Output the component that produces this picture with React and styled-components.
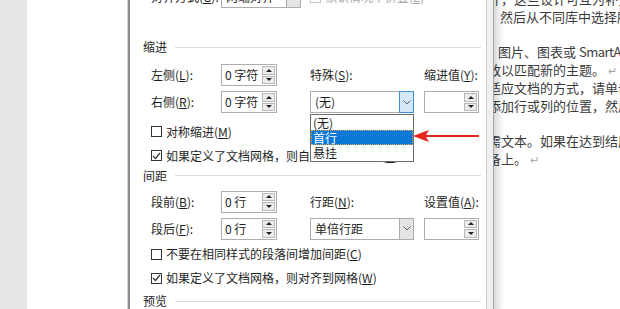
import React from 'react'
import styled, { createGlobalStyle } from 'styled-components'

const GlobalStyle = createGlobalStyle`
  html, body { margin: 0; padding: 0; background: #e6e6e6; }
  body { font-family: "Noto Sans CJK SC", "Noto Sans", sans-serif; }
`

const Screen = styled.div`
  display: flex;
  width: 620px;
  height: 309px;
  overflow: hidden;
  background: #e6e6e6;
`

const Gutter = styled.div`
  flex: none;
  width: 27px;
  background: #e6e6e6;
`

const PageEdge = styled.div`
  flex: none;
  width: 100px;
  background: #fff;
  border-right: 1px solid #d2d2d2;
`

const Dialog = styled.div`
  position: relative;
  flex: none;
  box-sizing: border-box;
  width: 359px;
  display: flex;
  flex-direction: column;
  padding-left: 13px;
  background: #fff;
  border-left: 2px solid #8e8e8e;
  border-right: 1px solid #cacaca;
  font-size: 12px;
  line-height: 16px;
  color: #1f1f1f;
`

const Frame = styled.div`
  flex: none;
  width: 6px;
  background: #f0f0f0;
  border-right: 1px solid #a4a4a4;
`

const Document = styled.div`
  position: relative;
  flex: 1;
  overflow: hidden;
  background: #fff;
  &::after {
    content: '';
    position: absolute;
    left: 0;
    top: 0;
    bottom: 0;
    width: 10px;
    background: linear-gradient(to right, rgba(0, 0, 0, 0.14), rgba(0, 0, 0, 0));
  }
`

const DocText = styled.div`
  margin-top: -10px;
  font-size: 13px;
  line-height: 17.8px;
  color: #3b3b3b;
  white-space: nowrap;
`

const DocLine = styled.div`
  height: 17.8px;
  margin-left: ${p => p.shift || 0}px;
`

const Latin = styled.span`
  letter-spacing: -0.5px;
`

const ReturnMark = styled.span`
  margin-left: 3px;
  font-size: 11px;
  color: #a8a8a8;
`

const TopRow = styled.div`
  display: grid;
  grid-template-columns: 70px 80px 9px auto;
  align-items: center;
  height: 22px;
  margin: -14px 0 0 8px;
`

const SectionHeader = styled.div`
  display: flex;
  align-items: center;
  gap: 8px;
  height: 16px;
  margin-top: ${p => p.top}px;
  margin-right: 5px;
  &::after {
    content: '';
    flex: 1;
    height: 1px;
    background: #dadada;
  }
`

const FieldGrid = styled.div`
  display: grid;
  grid-template-columns: 70px 56px 33px 104px 10px 55px;
  grid-auto-rows: 22px;
  row-gap: 5px;
  align-items: center;
  margin: ${p => p.top}px 0 0 8px;
`

const Label = styled.span`
  grid-column: ${p => p.col};
  white-space: nowrap;
`

const SpinBox = styled.div`
  grid-column: ${p => p.col};
  box-sizing: border-box;
  height: 22px;
  display: flex;
  align-items: center;
  justify-content: space-between;
  padding: 1px 1px 1px 3px;
  border: 1px solid #adadad;
  background: #fff;
`

const Spinner = styled.div`
  display: flex;
  flex-direction: column;
  gap: 1px;
  align-self: stretch;
  width: 13px;
`

const SpinButton = styled.div`
  flex: 1;
  display: flex;
  align-items: center;
  justify-content: center;
  box-sizing: border-box;
  border: 1px solid #b8b8b8;
  background: #ececec;
  &::before {
    content: '';
    border-left: 3px solid transparent;
    border-right: 3px solid transparent;
    ${p => (p.down ? 'border-top: 3px solid #222;' : 'border-bottom: 3px solid #222;')}
  }
`

const SelectCell = styled.div`
  grid-column: ${p => p.col};
  position: relative;
  height: 22px;
`

const Select = styled.div`
  box-sizing: border-box;
  height: 22px;
  display: flex;
  align-items: center;
  padding-left: 4px;
  border: 1px solid #adadad;
  background: #fff;
`

const SelectText = styled.span`
  flex: 1;
  white-space: nowrap;
`

const ArrowBox = styled.div`
  box-sizing: border-box;
  align-self: stretch;
  width: 15px;
  margin: -1px -1px -1px 0;
  display: flex;
  align-items: center;
  justify-content: center;
  border: 1px solid ${p => (p.hover ? '#3c8fd8' : '#adadad')};
  background: ${p => (p.hover ? '#d5e8f8' : '#e4e4e4')};
`

const ListBox = styled.div`
  position: absolute;
  z-index: 2;
  top: 23px;
  left: 0;
  width: 104px;
  box-sizing: border-box;
  border: 1px solid #6e6e6e;
  background: #fff;
  padding: 0 0 1px;
`

const ListItem = styled.div`
  height: 15px;
  line-height: 15px;
  padding-left: 2px;
  box-sizing: border-box;
  background: ${p => (p.active ? '#0a78d7' : '#fff')};
  color: ${p => (p.active ? '#fff' : '#1f1f1f')};
  outline: ${p => (p.active ? '1px dotted #e2a35a' : 'none')};
  outline-offset: -1px;
`

const CheckRow = styled.label`
  display: flex;
  align-items: center;
  gap: 4px;
  height: 18px;
  margin: ${p => p.top}px 0 0 ${p => (p.inline ? 0 : 8)}px;
  white-space: nowrap;
  color: ${p => (p.disabled ? '#a6a6a6' : 'inherit')};
`

const Box = styled.span`
  flex: none;
  box-sizing: border-box;
  width: 11px;
  height: 11px;
  display: flex;
  align-items: center;
  justify-content: center;
  border: 1px solid ${p => (p.disabled ? '#c4c4c4' : '#333')};
  background: #fff;
`

const Arrow = styled.svg`
  position: absolute;
  z-index: 3;
  left: 283px;
  top: 127px;
`

const Key = styled.u`
  text-underline-offset: 1px;
`

const Chevron = () => (
  <svg width="8" height="5" viewBox="0 0 8 5">
    <polyline points="0.5,0.5 4,4 7.5,0.5" fill="none" stroke="#5a5a5a" strokeWidth="1" />
  </svg>
)

const Check = ({ checked, disabled }) => (
  <Box disabled={disabled}>
    {checked && (
      <svg width="9" height="8" viewBox="0 0 9 8">
        <polyline points="1,4 3.5,6.5 8,1" fill="none" stroke="#333" strokeWidth="1.2" />
      </svg>
    )}
  </Box>
)

const Spin = ({ col, value }) => (
  <SpinBox col={col}>
    <span>{value}</span>
    <Spinner>
      <SpinButton />
      <SpinButton down />
    </Spinner>
  </SpinBox>
)

const Field = ({ k, text }) => (
  <>
    {text}(<Key>{k}</Key>):
  </>
)

const Option = ({ top, checked, disabled, inline, k, text }) => (
  <CheckRow top={top} disabled={disabled} inline={inline}>
    <Check checked={checked} disabled={disabled} />
    <span>
      {text}(<Key>{k}</Key>)
    </span>
  </CheckRow>
)

export default function App() {
  return (
    <>
      <GlobalStyle />
      <Screen>
        <Gutter />
        <PageEdge />
        <Dialog>
          <TopRow>
            <Label col={1}><Field k="G" text="对齐方式" /></Label>
            <Select>
              <SelectText>两端对齐</SelectText>
              <ArrowBox><Chevron /></ArrowBox>
            </Select>
            <span />
            <Option top={0} inline disabled k="E" text="默认情况下折叠" />
          </TopRow>

          <SectionHeader top={31}>缩进</SectionHeader>
          <FieldGrid top={9}>
            <Label col={1}><Field k="L" text="左侧" /></Label>
            <Spin col={2} value="0 字符" />
            <Label col={4}><Field k="S" text="特殊" /></Label>
            <Label col={6}><Field k="Y" text="缩进值" /></Label>

            <Label col={1}><Field k="R" text="右侧" /></Label>
            <Spin col={2} value="0 字符" />
            <SelectCell col={4}>
              <Select>
                <SelectText>(无)</SelectText>
                <ArrowBox hover><Chevron /></ArrowBox>
              </Select>
              <ListBox>
                <ListItem>(无)</ListItem>
                <ListItem active>首行</ListItem>
                <ListItem>悬挂</ListItem>
              </ListBox>
            </SelectCell>
            <Spin col={6} value="" />
          </FieldGrid>
          <Option top={10} k="M" text="对称缩进" />
          <Option top={6} checked k="D" text="如果定义了文档网格，则自动调整右缩进" />

          <SectionHeader top={3}>间距</SectionHeader>
          <FieldGrid top={7}>
            <Label col={1}><Field k="B" text="段前" /></Label>
            <Spin col={2} value="0 行" />
            <Label col={4}><Field k="N" text="行距" /></Label>
            <Label col={6}><Field k="A" text="设置值" /></Label>

            <Label col={1}><Field k="F" text="段后" /></Label>
            <Spin col={2} value="0 行" />
            <SelectCell col={4}>
              <Select>
                <SelectText>单倍行距</SelectText>
                <ArrowBox><Chevron /></ArrowBox>
              </Select>
            </SelectCell>
            <Spin col={6} value="" />
          </FieldGrid>
          <Option top={6} k="C" text="不要在相同样式的段落间增加间距" />
          <Option top={6} checked k="W" text="如果定义了文档网格，则对齐到网格" />

          <SectionHeader top={6}>预览</SectionHeader>

          <Arrow width="68" height="18" viewBox="0 0 68 18">
            <line x1="10" y1="9" x2="66" y2="9" stroke="#e5241c" strokeWidth="2" />
            <polygon points="0,9 16,3 12.5,9 16,15" fill="#e5241c" />
          </Arrow>
        </Dialog>
        <Frame />
        <Document>
          <DocText>
            <DocLine shift={-6}>计，这些设计可互为补充。</DocLine>
            <DocLine shift={-7}>，然后从不同库中选择所需元素。</DocLine>
            <DocLine />
            <DocLine shift={-9}>，图片、图表或 <Latin>SmartArt</Latin> 图形</DocLine>
            <DocLine shift={-6}>改以匹配新的主题。<ReturnMark>↵</ReturnMark></DocLine>
            <DocLine shift={-6}>适应文档的方式，请单击</DocLine>
            <DocLine shift={-6}>添加行或列的位置，然后</DocLine>
            <DocLine />
            <DocLine shift={-6}>需文本。如果在达到结尾</DocLine>
            <DocLine shift={-6}>备上。<ReturnMark>↵</ReturnMark></DocLine>
          </DocText>
        </Document>
      </Screen>
    </>
  )
}
